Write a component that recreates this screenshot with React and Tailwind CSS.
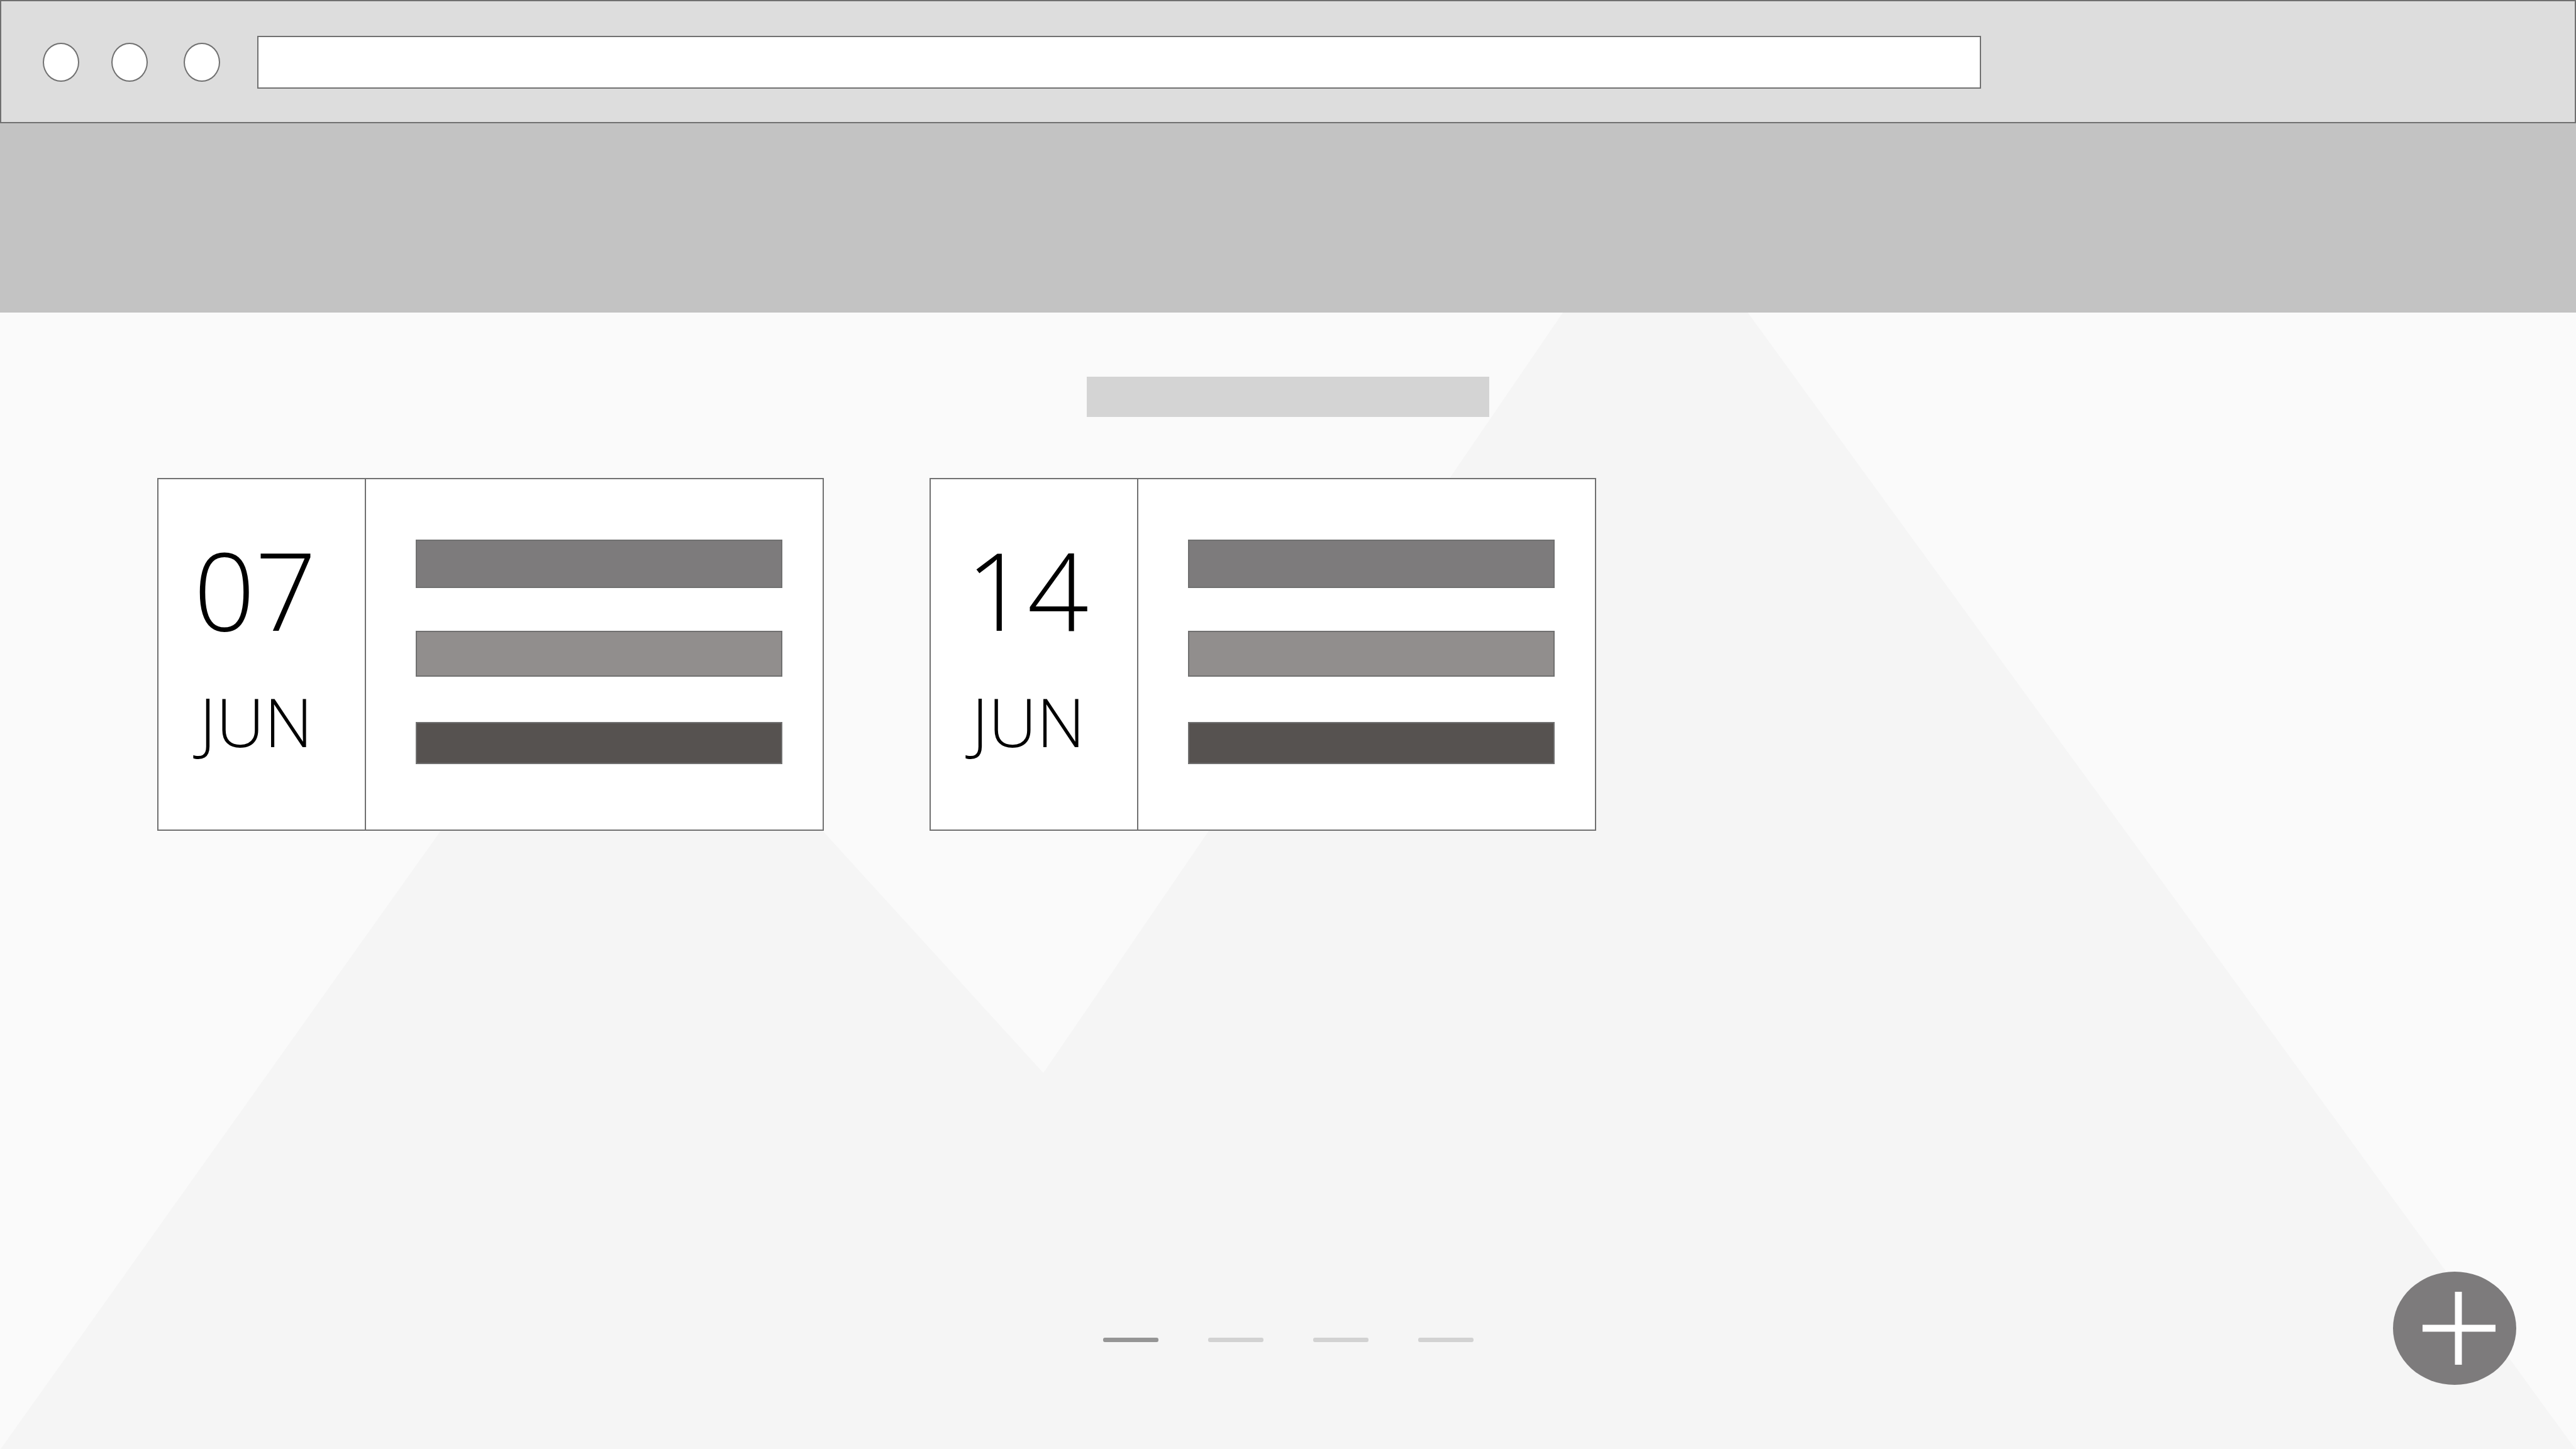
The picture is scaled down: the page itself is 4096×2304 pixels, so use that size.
const EVENTS = [
  { day: "07", month: "JUN" },
  { day: "14", month: "JUN" },
];

function Mountains() {
  return (
    <svg
      className="absolute inset-0 -z-10 h-full w-full"
      viewBox="0 0 4096 1807"
      preserveAspectRatio="none"
      aria-hidden="true"
    >
      <path
        fill="#f5f5f5"
        d="M1 1807 L967 450 L1659 1209 L2485 0 H2779 L4095 1807 Z"
      />
    </svg>
  );
}

function EventCard({ day, month }) {
  return (
    <article className="flex h-[561px] w-[1060px] border-2 border-[#707070] bg-white">
      <time className="flex w-[330px] flex-col border-r-2 border-[#707070] pl-[56px] pt-[45px] text-black">
        <span className="text-[171px] leading-[260px]">{day}</span>
        <span className="pl-[9px] text-[107px] leading-[160px]">{month}</span>
      </time>
      <div className="flex flex-1 flex-col pl-[79px] pr-[64px] pt-[96px]">
        <div className="h-[145px]">
          <div className="h-[77px] border-2 border-[#707070] bg-[#7d7b7c]" />
        </div>
        <div className="h-[145px]">
          <div className="h-[73px] border-2 border-[#707070] bg-[#918e8d]" />
        </div>
        <div className="h-[67px] border-2 border-[#707070] bg-[#565250]" />
      </div>
    </article>
  );
}

function WindowDot({ label }) {
  return (
    <button
      type="button"
      aria-label={label}
      className="h-[62px] w-[58px] rounded-[50%] border-2 border-[#707070] bg-white"
    />
  );
}

export default function App() {
  return (
    <div className="flex min-h-screen flex-col bg-[#fafafa] font-['Open_Sans',sans-serif] font-light">
      <header className="flex h-[196px] items-center border-2 border-[#707070] bg-[#dddddd] pl-[66px] pr-[944px] pt-[2px]">
        <WindowDot label="Close" />
        <div className="w-[51px]" />
        <WindowDot label="Minimize" />
        <div className="w-[57px]" />
        <WindowDot label="Maximize" />
        <input
          type="text"
          aria-label="Address"
          className="ml-[59px] h-[84px] flex-1 border-2 border-[#707070] bg-white px-6 text-5xl outline-none"
        />
      </header>
      <nav className="h-[301px] bg-[#c3c3c3]" />
      <main className="relative isolate flex flex-1 flex-col">
        <Mountains />
        <div className="mx-auto mt-[102px] h-[64px] w-[640px] bg-[#d4d4d4]" />
        <section className="mt-[97px] flex gap-[168px] pl-[250px]">
          {EVENTS.map((event) => (
            <EventCard key={event.day} {...event} />
          ))}
        </section>
        <div className="mt-auto flex justify-center gap-[79px] pb-[170px]">
          <button type="button" aria-label="Page 1" className="h-[7px] w-[88px] rounded-[3px] bg-[#959595]" />
          <button type="button" aria-label="Page 2" className="h-[7px] w-[88px] rounded-[3px] bg-[#d2d2d2]" />
          <button type="button" aria-label="Page 3" className="h-[7px] w-[88px] rounded-[3px] bg-[#d2d2d2]" />
          <button type="button" aria-label="Page 4" className="h-[7px] w-[88px] rounded-[3px] bg-[#d2d2d2]" />
        </div>
        <button
          type="button"
          aria-label="Add event"
          className="absolute bottom-[102px] right-[95px] h-[180px] w-[196px] rounded-[50%] bg-[#7d7b7c]"
        >
          <svg viewBox="0 0 196 180" className="h-full w-full" aria-hidden="true">
            <path d="M104 32 V148 M47 90 H163" stroke="#fff" strokeWidth="11" />
          </svg>
        </button>
      </main>
    </div>
  );
}
